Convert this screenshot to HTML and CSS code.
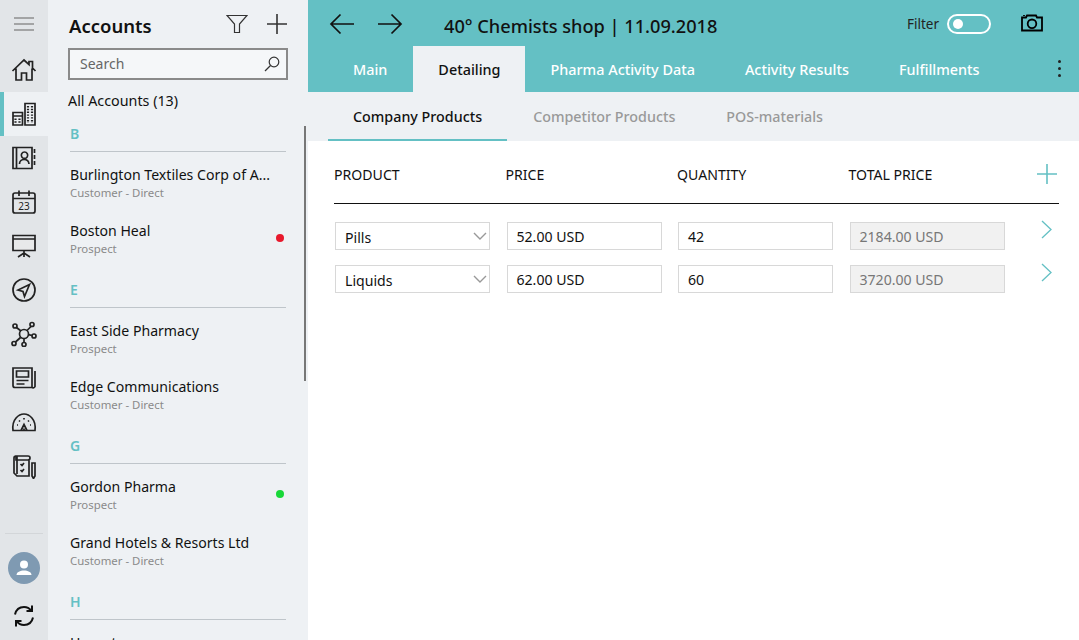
FILE: index.html
```html
<!DOCTYPE html>
<html lang="en">
<head>
<meta charset="utf-8">
<title>Accounts</title>
<link rel="stylesheet" href="styles.css">
</head>
<body>
<div class="app">
  <nav class="rail">
    <div class="rail-item rail-burger"><svg width="22" height="16" viewBox="0 0 22 16"><path d="M1 2h20M1 8h20M1 14h20" stroke="#8e8e8e" stroke-width="1.6" fill="none"/></svg></div>
    <div class="rail-list">
      <div class="rail-item"><svg class="ico" viewBox="0 0 26 26"><path d="M1.500 14 13 3l5 4.600V4.500h3.500V11L24.500 14M5 11.500V23h5.500v-7h5v7H21V11.500"/></svg></div>
      <div class="rail-item rail-active"><svg class="ico" viewBox="0 0 26 26"><path d="M2 11.500h9.500V24H2zM2 15h9.500M14 24V2.500h10V24z"/><path class="ico-dots" d="M4.500 17.500v5M8.500 17.500v5M17 5v17M21 5v17"/></svg></div>
      <div class="rail-item"><svg class="ico" viewBox="0 0 26 26"><path d="M2 2.500h19v21H2zM5.500 2.500v21M13.500 7a3.200 3.200 0 1 0 .01 0M8.500 19c0-6 9-6 9.500 0M23.500 4v4M23.500 10v4M23.500 16v4"/></svg></div>
      <div class="rail-item"><svg class="ico" viewBox="0 0 26 26"><rect x="2" y="4" width="22" height="20" rx="2"/><path d="M2 9.500h22M8 1.500V7M18 1.500V7"/><text x="13" y="21" class="ico-text">23</text></svg></div>
      <div class="rail-item"><svg class="ico" viewBox="0 0 26 26"><path class="ico-fill" d="M3 6.500h20v10.500H3z"/><path d="M2 2.500h22v15H2zM2 6h22M13 17.500V20M7 24l6-4 6 4M13 20v4"/></svg></div>
      <div class="rail-item"><svg class="ico" viewBox="0 0 26 26"><circle cx="13" cy="13" r="11"/><path d="M18.500 7.500 7 13l5 1.500L13.500 19.500z"/></svg></div>
      <div class="rail-item"><svg class="ico" viewBox="0 0 26 26"><circle cx="13" cy="13" r="4.500"/><circle cx="4" cy="5" r="2"/><circle cx="21" cy="3.500" r="2"/><circle cx="23" cy="15" r="2"/><circle cx="13" cy="23.500" r="2"/><circle cx="3" cy="22.500" r="2"/><path d="M5.500 6.500 10 10M20 5.500 16 9.500M21 14.500l-3.500-.8M13 21.500v-4M4.500 21l5-4.500"/></svg></div>
      <div class="rail-item"><svg class="ico" viewBox="0 0 26 26"><path d="M21 22.500H4a2 2 0 0 1-2-2V3h19v19.500a2 2 0 0 0 3-1V6M5.500 6h12v6h-12zM5.500 15.500h12M5.500 19h8"/></svg></div>
      <div class="rail-item"><svg class="ico" viewBox="0 0 26 26"><path d="M2 21.500C.5 10 8 5 13 5s12.500 5 11 16.500zM13 21.500v-2M10 21.500l3-6 3 6M6 16h1M19 16h1M8 11.500l1 1M18 11.500l-1 1M13 9v1.500"/></svg></div>
      <div class="rail-item"><svg class="ico" viewBox="0 0 26 26"><path d="M5 3h12a2 2 0 0 1 0 4H5zM5 3a2 2 0 0 0-2 2v15l3 3h12V7M6 3v18M9.500 11l1.500 1.500 2-2.500M9.500 17l1.500 1.500 2-2.500M21 10h3v13l-1.500 2.500L21 23z"/></svg></div>
    </div>
    <div class="rail-foot">
      <div class="avatar"><svg width="18" height="16" viewBox="0 0 18 16"><circle cx="9" cy="4.500" r="4" fill="#fff"/><path d="M1.500 15c0-6 15-6 15 0z" fill="#fff"/></svg></div>
      <div class="rail-item"><svg class="ico ico-sync" viewBox="0 0 24 24"><path d="M3 10.500C4 6 7.500 3 12 3c3 0 5.500 1.300 7 3.500M21 13.500c-1 4.500-4.500 7.500-9 7.500-3 0-5.500-1.300-7-3.500M20 1.500V7h-5.500M4 22.500V17h5.500"/></svg></div>
    </div>
  </nav>

  <aside class="panel">
    <header class="panel-head">
      <h1 class="panel-title">Accounts</h1>
      <svg class="head-ico filter-ico" viewBox="0 0 22 20"><path d="M1 1.500h20L13.500 10v8.500h-5V10z"/></svg>
      <svg class="head-ico plus-ico" viewBox="0 0 22 22"><path d="M11 1v20M1 11h20"/></svg>
    </header>
    <div class="search">
      <span class="search-text">Search</span>
      <svg class="search-ico" viewBox="0 0 16 16"><circle cx="10" cy="6" r="4.800"/><path d="M6.500 9.500 1 15"/></svg>
    </div>
    <div class="all-accounts">All Accounts (13)</div>
    <div class="scroll">
      <div class="list">
        <div class="letter">B</div>
        <div class="row"><div class="name">Burlington Textiles Corp of A...</div><div class="sub">Customer - Direct</div></div>
        <div class="row"><div class="name">Boston Heal</div><div class="sub">Prospect</div><span class="dot dot-red"></span></div>
        <div class="letter">E</div>
        <div class="row"><div class="name">East Side Pharmacy</div><div class="sub">Prospect</div></div>
        <div class="row"><div class="name">Edge Communications</div><div class="sub">Customer - Direct</div></div>
        <div class="letter">G</div>
        <div class="row"><div class="name">Gordon Pharma</div><div class="sub">Prospect</div><span class="dot dot-green"></span></div>
        <div class="row"><div class="name">Grand Hotels &amp; Resorts Ltd</div><div class="sub">Customer - Direct</div></div>
        <div class="letter">H</div>
        <div class="row"><div class="name">Hornet</div></div>
      </div>
      <div class="scrollbar"></div>
    </div>
  </aside>

  <main class="main">
    <div class="topbar">
      <div class="title-row">
        <svg class="arrow" viewBox="0 0 26 22"><path d="M25 11H2M11.500 1.500 2 11l9.500 9.500"/></svg>
        <svg class="arrow arrow-next" viewBox="0 0 26 22"><path d="M1 11h23M14.500 1.500 24 11l-9.500 9.500"/></svg>
        <div class="title">40° Chemists shop | 11.09.2018</div>
        <span class="filter-label">Filter</span>
        <span class="toggle"><span class="knob"></span></span>
        <svg class="camera" viewBox="0 0 22 18"><path d="M1 3.500h4l1-2h9l1 2h5v13H1z"/><circle cx="11" cy="9.800" r="4.300"/><path d="M3 1v1"/></svg>
      </div>
      <div class="tabs">
        <div class="tab">Main</div>
        <div class="tab tab-active">Detailing</div>
        <div class="tab">Pharma Activity Data</div>
        <div class="tab">Activity Results</div>
        <div class="tab">Fulfillments</div>
        <div class="kebab"><i></i><i></i><i></i></div>
      </div>
    </div>
    <div class="subtabs">
      <div class="subtab subtab-active">Company Products</div>
      <div class="subtab">Competitor Products</div>
      <div class="subtab">POS-materials</div>
    </div>
    <section class="content">
      <div class="thead">
        <div class="th">PRODUCT</div>
        <div class="th">PRICE</div>
        <div class="th">QUANTITY</div>
        <div class="th">TOTAL PRICE</div>
        <svg class="add" viewBox="0 0 20 20"><path d="M10 0v20M0 10h20"/></svg>
      </div>
      <div class="trow">
        <div class="field field-select">Pills<svg class="caret" viewBox="0 0 14 8"><path d="M1 1l6 6 6-6"/></svg></div>
        <div class="field">52.00 USD</div>
        <div class="field">42</div>
        <div class="field field-off">2184.00 USD</div>
        <svg class="next" viewBox="0 0 11 19"><path d="M1 1l9 8.500L1 18"/></svg>
      </div>
      <div class="trow">
        <div class="field field-select">Liquids<svg class="caret" viewBox="0 0 14 8"><path d="M1 1l6 6 6-6"/></svg></div>
        <div class="field">62.00 USD</div>
        <div class="field">60</div>
        <div class="field field-off">3720.00 USD</div>
        <svg class="next" viewBox="0 0 11 19"><path d="M1 1l9 8.500L1 18"/></svg>
      </div>
    </section>
  </main>
</div>
</body>
</html>
```
FILE: styles.css
```css
* { box-sizing: border-box; }
html, body { margin: 0; height: 100%; overflow: hidden; }
body { font-family: "Noto Sans", "Open Sans", sans-serif; font-size: 14px; color: #111; background: #fff; }
.app { display: flex; width: 1079px; height: 640px; overflow: hidden; }

/* Rail */
.rail { width: 48px; flex: none; background: #e2e5e8; display: flex; flex-direction: column; }
.rail-item { height: 44px; display: flex; align-items: center; justify-content: center; flex: none; }
.rail-burger { height: 48px; }
.rail-list { display: flex; flex-direction: column; }
.rail-active { background: #eef1f4; border-left: 4px solid #64c0c4; padding-right: 4px; }
.ico { width: 26px; height: 26px; fill: none; stroke: #222; stroke-width: 1.7; }
.ico-fill { fill: #e8e9ea; stroke: none; }
.ico-dots { stroke-width: 2.2; stroke-dasharray: 1.4 1.4; }
.ico-text { font-size: 10px; text-anchor: middle; fill: #222; stroke: none; }
.ico-sync { width: 24px; height: 24px; stroke: #111; stroke-width: 2; }
.rail-foot { margin-top: auto; margin-left: 5px; margin-right: 5px; border-top: 1px solid #d3d6d9; padding-top: 18px; display: flex; flex-direction: column; align-items: center; }
.avatar { width: 32px; height: 32px; border-radius: 50%; background: #7f9ab2; display: flex; align-items: center; justify-content: center; margin-bottom: 8px; }
.rail-foot .rail-item { width: 38px; height: 48px; }

/* Accounts panel */
.panel { width: 260px; flex: none; background: #eef1f4; display: flex; flex-direction: column; overflow: hidden; }
.panel-head { height: 48px; flex: none; display: flex; align-items: center; padding: 2px 20px 0 21px; }
.panel-title { margin: 0; font-size: 18.500px; font-weight: 600; flex: 1; color: #111; }
.head-ico { fill: none; stroke: #333; }
.filter-ico { width: 22px; height: 20px; stroke-width: 1.2; margin-right: 18px; margin-top: -2px; }
.plus-ico { width: 22px; height: 22px; stroke-width: 1.6; margin-top: -2px; }
.search { margin-left: 20px; width: 220px; height: 32px; flex: none; border: 2px solid #8a8a8a; background: #f5f7f9; display: flex; align-items: center; justify-content: space-between; padding: 0 6px 2px 10px; }
.search-text { color: #666; font-size: 14px; }
.search-ico { width: 16px; height: 16px; fill: none; stroke: #333; stroke-width: 1.2; margin-top: 2px; }
.all-accounts { margin: 10px 0 0 20px; font-size: 14.300px; line-height: 21px; flex: none; }
.scroll { position: relative; flex: 1; overflow: hidden; }
.list { padding: 0 22px; }
.letter { height: 32px; color: #64c0c4; font-weight: 600; font-size: 14px; line-height: 24px; padding-top: 2px; border-bottom: 1px solid #bfc5ca; margin-top: 12px; }
.letter:first-child { margin-top: 9px; }
.row { position: relative; height: 56px; padding-top: 13px; }
.name { font-size: 14.100px; line-height: 20px; white-space: nowrap; color: #111; }
.sub { font-size: 11.400px; line-height: 16px; color: #8a8a8a; }
.dot { position: absolute; right: 2px; top: 26px; width: 8px; height: 8px; border-radius: 50%; }
.dot-red { background: #e8192c; }
.dot-green { background: #18d838; }
.scrollbar { position: absolute; right: 2px; top: 15px; width: 2px; height: 255px; background: #777; }

/* Main */
.main { flex: 1; min-width: 0; display: flex; flex-direction: column; background: #fff; }
.topbar { background: #64c0c4; height: 92px; flex: none; display: flex; flex-direction: column; }
.title-row { height: 46px; flex: none; display: flex; align-items: center; padding: 0 0 0 21px; }
.arrow { width: 26px; height: 22px; fill: none; stroke: #111; stroke-width: 1.7; margin-top: 2px; }
.arrow-next { margin-left: 22px; }
.title { font-size: 18.200px; font-weight: 500; margin-left: 41px; width: 463px; color: #111; white-space: nowrap; margin-top: 6px; }
.filter-label { font-size: 13.500px; color: #222; margin-top: 2px; }
.toggle { width: 44px; height: 20px; margin-left: 8px; margin-top: 2px; border: 2px solid #fff; border-radius: 10px; display: flex; align-items: center; padding-left: 4px; }
.knob { width: 10px; height: 10px; border-radius: 50%; background: #fff; }
.camera { width: 22px; height: 18px; margin-left: 30px; fill: none; stroke: #000; stroke-width: 1.8; }
.tabs { height: 46px; flex: none; display: flex; align-items: stretch; padding-left: 20px; position: relative; }
.tab { padding: 1px 25px 0; display: flex; align-items: center; color: #fff; font-weight: 500; font-size: 14.400px; white-space: nowrap; }
.tab-active { background: #eef1f4; color: #111; margin-left: 1px; }
.kebab { position: absolute; right: 18px; top: 14px; display: flex; flex-direction: column; gap: 4px; }
.kebab i { width: 3px; height: 3px; border-radius: 50%; background: #222; display: block; }
.subtabs { height: 49px; flex: none; background: #eef1f4; display: flex; padding-left: 20px; gap: 1px; }
.subtab { padding: 0 25px; display: flex; align-items: center; font-weight: 500; font-size: 14.300px; color: #999; white-space: nowrap; }
.subtab-active { color: #111; border-bottom: 2px solid #64c0c4; padding-top: 2px; }
.content { flex: 1; padding: 0 20px 0 26px; }
.thead { height: 63px; display: grid; grid-template-columns: repeat(4, 171.500px) 1fr; align-items: center; border-bottom: 1px solid #111; padding-top: 4px; }
.th { font-size: 14.100px; color: #111; }
.add { width: 20px; height: 20px; justify-self: end; margin-right: 2px; fill: none; stroke: #64c0c4; stroke-width: 1.6; }
.trow { height: 43px; display: grid; grid-template-columns: repeat(4, 171.500px) 1fr; align-items: start; padding: 0 0 0 1px; }
.thead + .trow { margin-top: 18px; }
.field { width: 155px; height: 28px; border: 1px solid #d8d8d8; background: #fff; display: flex; align-items: center; padding: 0 9px; font-size: 14.100px; color: #111; white-space: nowrap; }
.field-select { justify-content: space-between; padding-top: 2px; padding-right: 2px; }
.field-off { background: #f1f1f1; color: #777; }
.caret { width: 14px; height: 8px; fill: none; stroke: #999; stroke-width: 1.4; margin-top: -2px; }
.next { width: 11px; height: 19px; justify-self: end; margin-right: 7px; margin-top: -2px; fill: none; stroke: #64c0c4; stroke-width: 1.3; }
```
